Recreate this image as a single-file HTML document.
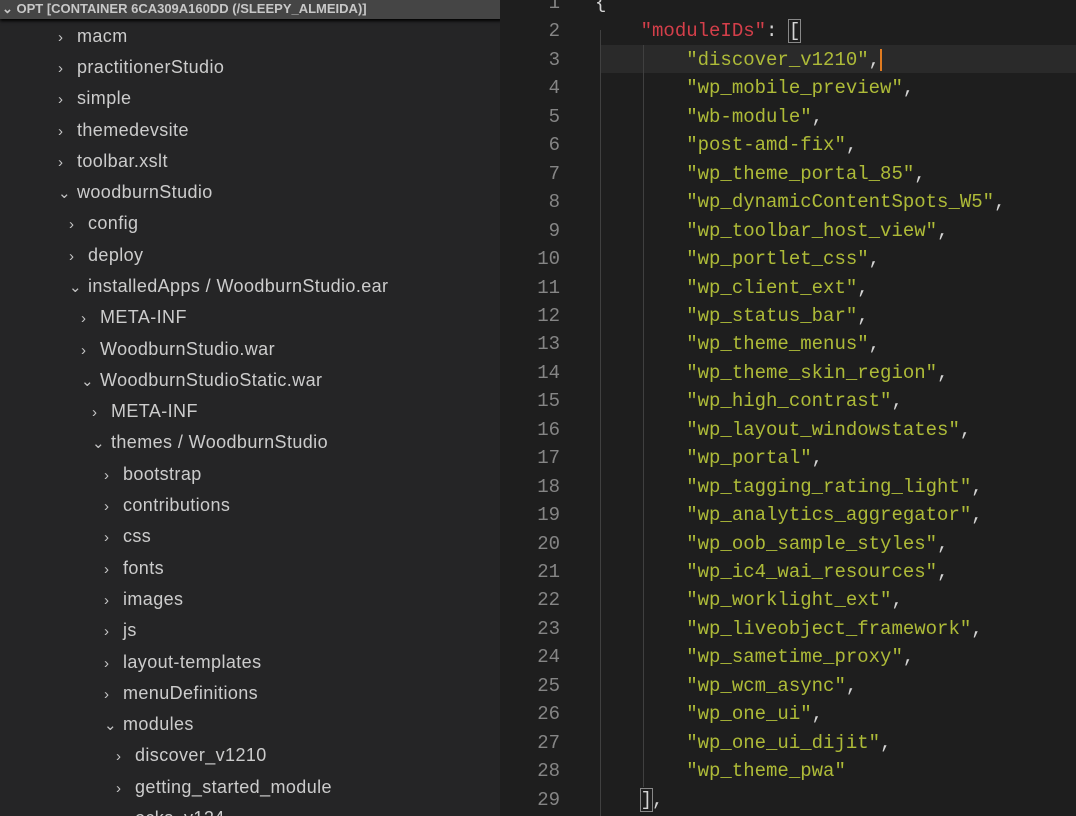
<!DOCTYPE html><html><head><style>
html,body{margin:0;width:1076px;height:816px;overflow:hidden}
body{background:#1e1e1e;position:relative}
#sb{position:absolute;left:0;top:0;width:500px;height:816px;background:#252526;font-family:"Liberation Sans",sans-serif;color:#cccccc;font-size:18px;letter-spacing:0.4px;overflow:hidden}
#hd{position:absolute;left:0;top:0;width:500px;height:19px;background:#454545;color:#c8c8c8;font-weight:bold;font-size:13px;line-height:17px;padding-left:2px;white-space:nowrap;overflow:hidden;box-shadow:0 2px 3px #000;letter-spacing:0}
.r{position:absolute;white-space:nowrap;height:31px;line-height:31px}
.c{display:inline-block;width:19px;color:#c5c5c5;font-size:15px}
#ed{position:absolute;left:500px;top:0;width:576px;height:816px;font-family:"Liberation Mono",monospace;font-size:19px;overflow:hidden}
.l{position:absolute;left:0;height:28.45px;line-height:28.45px;white-space:pre;width:576px}
.n{position:absolute;right:516px;color:#858585;text-align:right}
.t{position:absolute;left:95px}
.s{color:#aebb38}.k{color:#d43f4a}.p{color:#d4d4d4}
</style></head><body>
<div id="sb"><div id="hd">⌄ OPT [CONTAINER 6CA309A160DD (/SLEEPY_ALMEIDA)]</div>
<div class="r" style="top:21px;left:58px"><span class="c">›</span>macm</div>
<div class="r" style="top:52px;left:58px"><span class="c">›</span>practitionerStudio</div>
<div class="r" style="top:83px;left:58px"><span class="c">›</span>simple</div>
<div class="r" style="top:115px;left:58px"><span class="c">›</span>themedevsite</div>
<div class="r" style="top:146px;left:58px"><span class="c">›</span>toolbar.xslt</div>
<div class="r" style="top:177px;left:58px"><span class="c">⌄</span>woodburnStudio</div>
<div class="r" style="top:208px;left:69px"><span class="c">›</span>config</div>
<div class="r" style="top:240px;left:69px"><span class="c">›</span>deploy</div>
<div class="r" style="top:271px;left:69px"><span class="c">⌄</span>installedApps / WoodburnStudio.ear</div>
<div class="r" style="top:302px;left:81px"><span class="c">›</span>META-INF</div>
<div class="r" style="top:334px;left:81px"><span class="c">›</span>WoodburnStudio.war</div>
<div class="r" style="top:365px;left:81px"><span class="c">⌄</span>WoodburnStudioStatic.war</div>
<div class="r" style="top:396px;left:92px"><span class="c">›</span>META-INF</div>
<div class="r" style="top:427px;left:92px"><span class="c">⌄</span>themes / WoodburnStudio</div>
<div class="r" style="top:459px;left:104px"><span class="c">›</span>bootstrap</div>
<div class="r" style="top:490px;left:104px"><span class="c">›</span>contributions</div>
<div class="r" style="top:521px;left:104px"><span class="c">›</span>css</div>
<div class="r" style="top:553px;left:104px"><span class="c">›</span>fonts</div>
<div class="r" style="top:584px;left:104px"><span class="c">›</span>images</div>
<div class="r" style="top:615px;left:104px"><span class="c">›</span>js</div>
<div class="r" style="top:647px;left:104px"><span class="c">›</span>layout-templates</div>
<div class="r" style="top:678px;left:104px"><span class="c">›</span>menuDefinitions</div>
<div class="r" style="top:709px;left:104px"><span class="c">⌄</span>modules</div>
<div class="r" style="top:740px;left:116px"><span class="c">›</span>discover_v1210</div>
<div class="r" style="top:772px;left:116px"><span class="c">›</span>getting_started_module</div>
<div class="r" style="top:803px;left:116px"><span class="c">›</span>ocks_v124</div>
</div>
<div id="ed">
<div style="position:absolute;left:100px;top:45px;width:476px;height:28px;background:#2a2a2a"></div>
<div style="position:absolute;left:100px;top:30px;width:1px;height:786px;background:#404040"></div>
<div style="position:absolute;left:143px;top:45px;width:1px;height:742px;background:#404040"></div>
<div id="lines"></div>
</div>
<script>
var m=["discover_v1210","wp_mobile_preview","wb-module","post-amd-fix","wp_theme_portal_85","wp_dynamicContentSpots_W5","wp_toolbar_host_view","wp_portlet_css","wp_client_ext","wp_status_bar","wp_theme_menus","wp_theme_skin_region","wp_high_contrast","wp_layout_windowstates","wp_portal","wp_tagging_rating_light","wp_analytics_aggregator","wp_oob_sample_styles","wp_ic4_wai_resources","wp_worklight_ext","wp_liveobject_framework","wp_sametime_proxy","wp_wcm_async","wp_one_ui","wp_one_ui_dijit","wp_theme_pwa"];
var h='';function L(i,c){h+='<div class="l" style="top:'+(-11+i*28.45)+'px"><span class="n">'+(i+1)+'</span><span class="t">'+c+'</span></div>';}
L(0,'<span class="p">{</span>');
L(1,'<span class="p">    </span><span class="k">"moduleIDs"</span><span class="p">: <span style="outline:1px solid #888">[</span></span>');
for(var i=0;i<m.length;i++)L(i+2,'        <span class="s">"'+m[i]+'"</span><span class="p">'+(i<m.length-1?',':'')+'</span>'+(i==0?'<span style="border-left:2px solid #e07b20"></span>':''));
L(28,'    <span class="p"><span style="outline:1px solid #888">]</span>,</span>');
document.getElementById('lines').innerHTML=h;
</script>
</body></html>
